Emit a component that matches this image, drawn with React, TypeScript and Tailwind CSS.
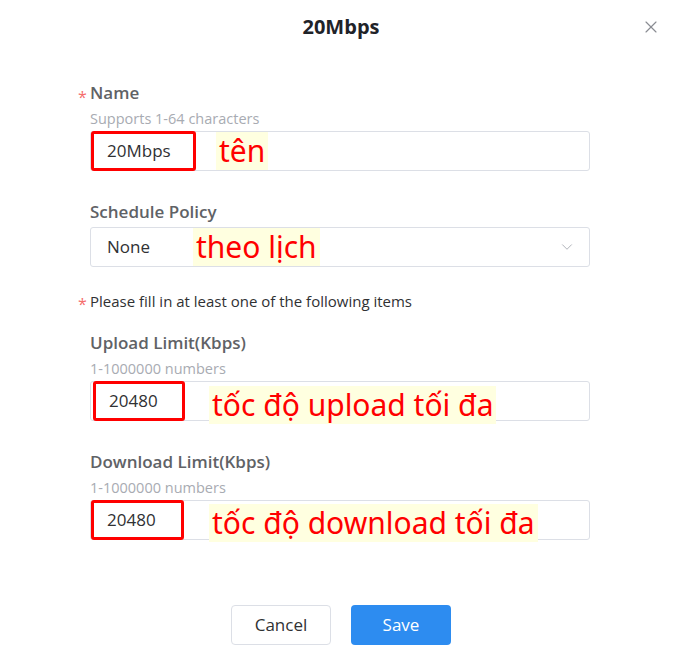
import { ChevronDown, X } from "lucide-react";
import type { ReactNode } from "react";

const font = { fontFamily: '"Open Sans", "Noto Sans", sans-serif' };

function Note({ children }: { children: ReactNode }) {
  return (
    <span
      className="flex h-[38px] items-center bg-[#ffffe0] px-[3px] text-[30px] leading-none text-[#ff0000]"
      style={{ fontFamily: '"Noto Sans", sans-serif' }}
    >
      {children}
    </span>
  );
}

function Field({
  label,
  required,
  help,
  children,
  className = "",
}: {
  label: string;
  required?: boolean;
  help?: string;
  children: ReactNode;
  className?: string;
}) {
  return (
    <div className={className}>
      <div className="relative flex h-[22px] items-center text-[17px] font-semibold text-[#606266]">
        {required && (
          <span className="absolute -left-[12px] top-[3px] text-[16px] font-normal text-[#f56c6c]">
            *
          </span>
        )}
        {label}
      </div>
      {help && (
        <div className="mt-[6px] h-[18px] text-[14.5px] leading-[18px] text-[#a8abb2]">
          {help}
        </div>
      )}
      <div className={help ? "mt-[3px]" : "mt-[4px]"}>{children}</div>
    </div>
  );
}

function ValueInput({
  value,
  note,
  boxW,
  gap,
}: {
  value: string;
  note: string;
  boxW: string;
  gap: string;
}) {
  return (
    <div className="flex h-[40px] items-center rounded-[3px] border border-[#dcdfe6] bg-white">
      <span
        className={`flex h-[40px] items-center rounded-[3px] border-[3px] border-[#ff0000] pl-[13px] text-[17px] text-[#303133] ${boxW}`}
      >
        {value}
      </span>
      <span className={gap}>
        <Note>{note}</Note>
      </span>
    </div>
  );
}

export default function App() {
  return (
    <div className="h-[670px] w-[682px] bg-white" style={font}>
      <header className="relative flex h-[54px] items-center justify-center">
        <h1 className="text-[20px] font-bold text-[#1f2329]">20Mbps</h1>
        <X
          className="absolute right-[21px] top-[17px] h-[20px] w-[20px] text-[#8a8c92]"
          strokeWidth={1.4}
        />
      </header>

      <div className="ml-[90px] w-[500px] pt-[28px]">
        <Field label="Name" required help="Supports 1-64 characters">
          <ValueInput value="20Mbps" note="tên" boxW="w-[105px]" gap="ml-[20px]" />
        </Field>

        <Field label="Schedule Policy" className="mt-[30px]">
          <div className="flex h-[40px] items-center rounded-[3px] border border-[#dcdfe6] pl-[16px] pr-[13px] text-[17px] text-[#303133]">
            <span className="w-[86px]">None</span>
            <Note>theo lịch</Note>
            <ChevronDown
              className="ml-auto h-[18px] w-[18px] text-[#a8abb2]"
              strokeWidth={1.2}
            />
          </div>
        </Field>

        <div className="relative mt-[24px] flex h-[20px] items-center text-[15px] text-[#303133]">
          <span className="absolute -left-[12px] top-[1px] text-[16px] text-[#f56c6c]">*</span>
          Please fill in at least one of the following items
        </div>

        <Field label="Upload Limit(Kbps)" help="1-1000000 numbers" className="mt-[21px]">
          <ValueInput
            value="20480"
            note="tốc độ upload tối đa"
            boxW="w-[92px] ml-[2px]"
            gap="ml-[24px] mt-[7px]"
          />
        </Field>

        <Field label="Download Limit(Kbps)" help="1-1000000 numbers" className="mt-[30px]">
          <ValueInput
            value="20480"
            note="tốc độ download tối đa"
            boxW="w-[93px]"
            gap="ml-[25px] mt-[5px]"
          />
        </Field>
      </div>

      <div className="mt-[65px] flex justify-center gap-[20px]">
        <button className="h-[40px] w-[100px] rounded-[4px] border border-[#dcdfe6] bg-white text-[17px] text-[#303133]">
          Cancel
        </button>
        <button className="h-[40px] w-[100px] rounded-[4px] bg-[#2d8cf0] text-[17px] text-white">
          Save
        </button>
      </div>
    </div>
  );
}
